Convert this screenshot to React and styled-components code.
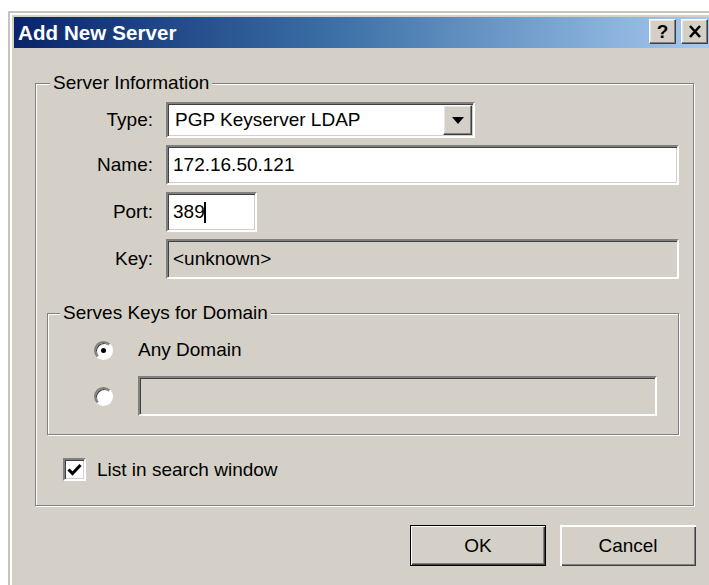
import React from "react";
import styled, { createGlobalStyle } from "styled-components";

const GlobalStyle = createGlobalStyle`
  html, body {
    margin: 0;
    padding: 0;
    background: #ffffff;
    overflow: hidden;
  }
  body {
    font-family: "Liberation Sans", Arial, sans-serif;
    font-size: 19px;
    color: #000;
  }
`;

const Window = styled.div`
  margin: 11px 0 0 8px;
  width: 708px;
  height: 600px;
  box-sizing: border-box;
  background: #d4d0c8;
  border: 2px solid;
  border-color: #c8c4bc #404040 #404040 #c8c4bc;
  box-shadow: inset 2px 2px 0 #ffffff, inset -2px -2px 0 #808080;
  padding: 4px;
  display: flex;
  flex-direction: column;
`;

const TitleBar = styled.div`
  height: 31px;
  flex: none;
  display: flex;
  align-items: center;
  justify-content: space-between;
  padding: 0 2px 0 4px;
  background: linear-gradient(to right, #0a246a 0%, #3a6ea5 45%, #a6caf0 100%);
  color: #ffffff;
  font-weight: bold;
  font-size: 20.5px;
  letter-spacing: 0.1px;
`;

const TitleButtons = styled.div`
  display: flex;
  gap: 5px;
  margin-top: -2px;
`;

const raised = `
  background: #d4d0c8;
  border: 1px solid;
  border-color: #ffffff #404040 #404040 #ffffff;
  box-shadow: inset -1px -1px 0 #808080, inset 1px 1px 0 #e8e6e2;
`;

const CaptionButton = styled.div`
  ${raised}
  box-sizing: border-box;
  width: 27px;
  height: 25px;
  display: flex;
  align-items: center;
  justify-content: center;
  color: #000;
  font-weight: bold;
  font-size: 19px;
  line-height: 1;
`;

const Body = styled.div`
  flex: 1;
  display: flex;
  flex-direction: column;
  padding: 0 14px 0 21px;
`;

const Group = styled.div`
  display: flex;
  flex-direction: column;
  border: 1px solid #808080;
  box-shadow: inset 1px 1px 0 #ffffff, 1px 1px 0 #ffffff;
  margin-top: ${(p) => p.$top}px;
  margin-right: ${(p) => p.$right || 0}px;
  padding: ${(p) => p.$pad};
`;

const Legend = styled.span`
  align-self: flex-start;
  margin: -12px 0 0 ${(p) => p.$indent}px;
  padding: 0 3px;
  height: 22px;
  line-height: 22px;
  background: #d4d0c8;
`;

const FormGrid = styled.div`
  display: grid;
  grid-template-columns: 106px 513px;
  grid-template-rows: 36px 40px 40px 40px;
  column-gap: 13px;
  row-gap: 7px;
  margin-top: 8px;
  align-items: center;
`;

const Label = styled.label`
  text-align: right;
`;

const sunken = `
  box-sizing: border-box;
  border: 2px solid;
  border-color: #808080 #ffffff #ffffff #808080;
  box-shadow: inset 1px 1px 0 #404040, inset -1px -1px 0 #d4d0c8;
`;

const Field = styled.div`
  ${sunken}
  height: ${(p) => p.$h || 40}px;
  width: ${(p) => (p.$w ? `${p.$w}px` : "100%")};
  background: ${(p) => (p.$disabled ? "#d4d0c8" : "#ffffff")};
  display: flex;
  align-items: center;
  padding-left: ${(p) => p.$indent || 5}px;
  white-space: nowrap;
`;

const Caret = styled.span`
  display: inline-block;
  width: 2px;
  height: 21px;
  background: #000;
  margin-left: -1px;
`;

const Combo = styled.div`
  ${sunken}
  width: 309px;
  height: 36px;
  background: #ffffff;
  display: flex;
  align-items: stretch;
  padding: 1px 1px 1px 7px;
`;

const ComboText = styled.span`
  flex: 1;
  display: flex;
  align-items: center;
`;

const DropButton = styled.div`
  ${raised}
  box-sizing: border-box;
  width: 29px;
  display: flex;
  align-items: center;
  justify-content: center;
`;

const ChoiceGrid = styled.div`
  display: grid;
  grid-template-columns: 19px 1fr;
  grid-template-rows: 30px 40px;
  column-gap: 25px;
  row-gap: 11px;
  align-items: center;
  margin-top: 11px;
`;

const Radio = styled.span`
  box-sizing: border-box;
  width: 19px;
  height: 19px;
  border-radius: 50%;
  border: 2px solid;
  border-color: #808080 #ffffff #ffffff #808080;
  background: #ffffff;
  box-shadow: inset 1px 1px 0 #404040;
  display: flex;
  align-items: center;
  justify-content: center;
  &::after {
    content: "";
    width: 5px;
    height: 5px;
    border-radius: 50%;
    background: ${(p) => (p.$checked ? "#000" : "transparent")};
  }
`;

const CheckRow = styled.label`
  display: flex;
  align-items: center;
  gap: 11px;
  margin: 23px 0 0 16px;
`;

const CheckBox = styled.span`
  ${sunken}
  width: 23px;
  height: 23px;
  background: #ffffff;
  display: flex;
  align-items: center;
  justify-content: center;
`;

const ButtonRow = styled.div`
  display: flex;
  justify-content: flex-end;
  gap: 14px;
  margin-top: 19px;
`;

const PushButton = styled.button`
  box-sizing: border-box;
  width: 136px;
  height: 41px;
  font: inherit;
  color: #000;
  background: #d4d0c8;
  padding: 0;
  border: ${(p) => (p.$default ? "1px solid #000" : "none")};
  box-shadow: ${(p) =>
    p.$default
      ? "inset 1px 1px 0 #ffffff, inset -1px -1px 0 #404040, inset -2px -2px 0 #808080"
      : "inset 2px 2px 0 #ffffff, inset -1px -1px 0 #404040, inset -2px -2px 0 #808080"};
`;

export default function App() {
  return (
    <>
      <GlobalStyle />
      <Window>
        <TitleBar>
          <span>Add New Server</span>
          <TitleButtons>
            <CaptionButton>?</CaptionButton>
            <CaptionButton>
              <svg width="14" height="13" viewBox="0 0 14 13">
                <path d="M2 1 L12 12 M12 1 L2 12" stroke="#000" strokeWidth="2.6" />
              </svg>
            </CaptionButton>
          </TitleButtons>
        </TitleBar>
        <Body>
          <Group $top={35} $right={2} $pad="0 14px 24px 11px">
            <Legend $indent={3}>Server Information</Legend>
            <FormGrid>
              <Label>Type:</Label>
              <Combo>
                <ComboText>PGP Keyserver LDAP</ComboText>
                <DropButton>
                  <svg width="12" height="7" viewBox="0 0 12 7">
                    <path d="M0 0 H12 L6 7 Z" fill="#000" />
                  </svg>
                </DropButton>
              </Combo>
              <Label>Name:</Label>
              <Field>172.16.50.121</Field>
              <Label>Port:</Label>
              <Field $w={91}>
                389
                <Caret />
              </Field>
              <Label>Key:</Label>
              <Field $disabled>&lt;unknown&gt;</Field>
            </FormGrid>
            <Group $top={34} $pad="0 21px 18px 46px">
              <Legend $indent={-34}>Serves Keys for Domain</Legend>
              <ChoiceGrid>
                <Radio $checked />
                <span>Any Domain</span>
                <Radio />
                <Field $disabled />
              </ChoiceGrid>
            </Group>
            <CheckRow>
              <CheckBox>
                <svg width="15" height="13" viewBox="0 0 15 13">
                  <path d="M1.5 6.5 L5.5 10.5 L13.5 2" fill="none" stroke="#000" strokeWidth="3" />
                </svg>
              </CheckBox>
              <span>List in search window</span>
            </CheckRow>
          </Group>
          <ButtonRow>
            <PushButton $default>OK</PushButton>
            <PushButton>Cancel</PushButton>
          </ButtonRow>
        </Body>
      </Window>
    </>
  );
}
